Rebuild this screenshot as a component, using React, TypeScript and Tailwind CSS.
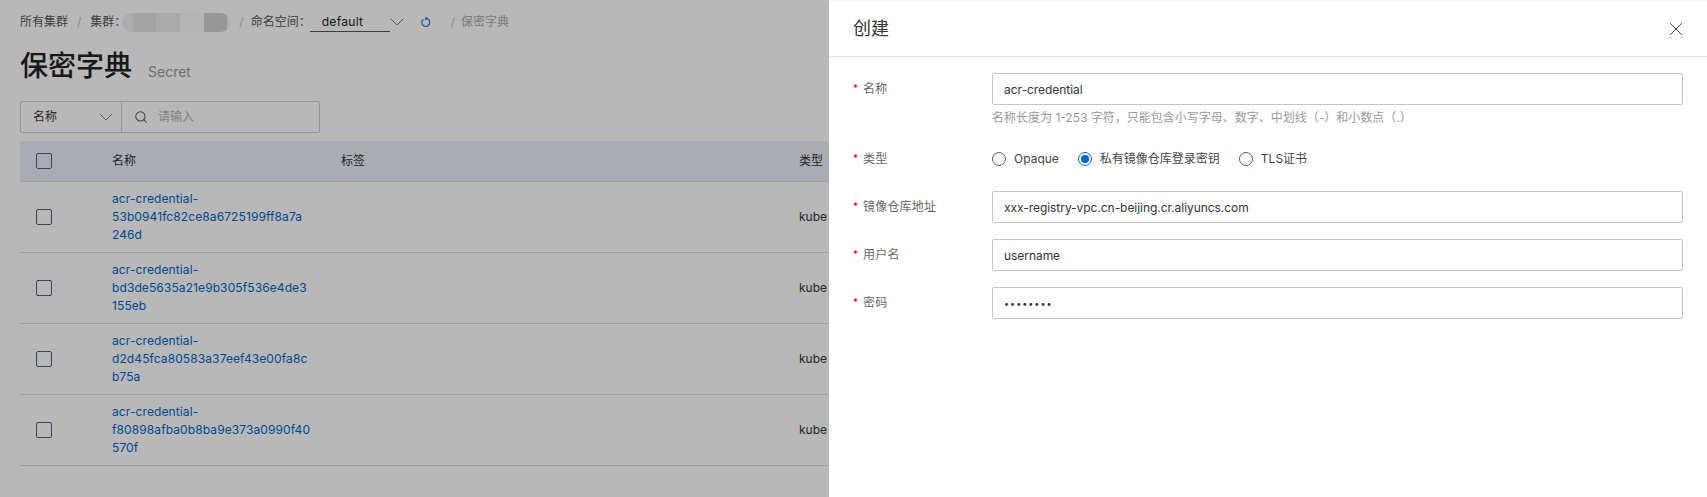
import { ChevronDown, Search, X } from 'lucide-react';

const secrets = [
  ['acr-credential-', '53b0941fc82ce8a6725199ff8a7a', '246d'],
  ['acr-credential-', 'bd3de5635a21e9b305f536e4de3', '155eb'],
  ['acr-credential-', 'd2d45fca80583a37eef43e00fa8c', 'b75a'],
  ['acr-credential-', 'f80898afba0b8ba9e373a0990f40', '570f'],
];

function Checkbox() {
  return <div className="w-4 h-4 rounded-[2px] border border-[#3f6188] bg-transparent" />;
}

function Slash() {
  return <span className="text-[#c4c4c4]">/</span>;
}

function Field({ label, value, type = 'text' }: { label: string; value: string; type?: string }) {
  return (
    <div className="flex mb-4">
      <FormLabel label={label} />
      <input
        readOnly
        type={type}
        value={value}
        className={`flex-1 h-8 pl-[11px] pr-3 text-[#333] border border-[#c0c6cc] rounded-[2px] outline-none ${type === 'password' ? 'text-[9px] tracking-[1px]' : 'text-xs tracking-[-0.05px]'}`}
      />
    </div>
  );
}

function FormLabel({ label }: { label: string }) {
  return (
    <label className="w-[139px] shrink-0 h-[32px] flex items-center text-xs tracking-[0.2px] text-[#666]">
      <span className="w-[10px] text-[10px] text-[#e00000]">*</span>
      {label}
    </label>
  );
}

function Radio({ label, checked }: { label: string; checked?: boolean }) {
  return (
    <div className="flex items-center gap-2">
      <span className={`w-[14px] h-[14px] rounded-full border flex items-center justify-center ${checked ? 'border-[#0064c8]' : 'border-[#3f6188]'}`}>
        {checked && <span className="w-2 h-2 rounded-full bg-[#0064c8]" />}
      </span>
      <span className="text-xs text-[#444]">{label}</span>
    </div>
  );
}

export default function App() {
  return (
    <div className="relative h-screen overflow-hidden bg-white font-['Inter','Noto_Sans_CJK_SC',sans-serif]">
      {/* Page behind the drawer */}
      <div className="px-5 pt-3">
        <div className="flex items-center h-5 text-xs text-[#555]">
          <span>所有集群</span>
          <span className="mx-[9px]"><Slash /></span>
          <span>集群：</span>
          <div className="flex h-[19px] w-[108px] ml-[-4px] mt-[1px] overflow-hidden rounded-full bg-[#f0f0f0]">
            <div className="w-[11px]" />
            <div className="w-[23px] bg-[#e4e4e4]" />
            <div className="w-[24px] bg-[#ececec]" />
            <div className="w-[24px] bg-[#fbfbfb]" />
            <div className="w-[23px] bg-[#d2d2d2]" />
          </div>
          <span className="ml-[9px] mr-[7px]"><Slash /></span>
          <span>命名空间：</span>
          <div className="flex items-center w-[80px] h-5 ml-[-1px] pl-3 border-b border-[#555] text-xs tracking-[0.3px] text-[#222]">default</div>
          <ChevronDown className="w-6 h-6 -mx-[5px] text-[#555]" strokeWidth={0.75} />
          <svg viewBox="0 0 12 12" className="w-3 h-3 ml-[16px]" fill="none" stroke="#2f78d0" strokeWidth="1.3">
            <path d="M7.2 2.7 A4 4 0 1 1 3.4 3.2" />
            <path d="M5.2 0.6 L8.2 2.6 L5.2 4.6 Z" fill="#2f78d0" stroke="none" />
          </svg>
          <span className="ml-[19px] mr-[6px]"><Slash /></span>
          <span className="text-[#aaa]">保密字典</span>
        </div>

        <div className="flex items-baseline mt-[14px] h-10">
          <h1 className="text-[28px] leading-10 font-medium text-[#222]">保密字典</h1>
          <span className="ml-4 text-sm translate-y-[1px] text-[#999]">Secret</span>
        </div>

        <div className="flex w-[300px] h-8 mt-[15px] border border-[#d0d0d0] rounded-[2px] text-xs">
          <div className="flex items-center justify-between w-[101px] pl-3 pr-[3px] border-r border-[#d0d0d0] text-[#333]">
            名称
            <ChevronDown className="w-6 h-6 text-[#555]" strokeWidth={0.75} />
          </div>
          <div className="flex items-center pl-3 text-[#b5b5b5]">
            <Search className="w-[14px] h-[14px] text-[#555] mr-[10px]" strokeWidth={1.75} />
            请输入
          </div>
        </div>

        <div className="mt-2 text-xs">
          <div className="flex items-center h-[41px] bg-[#ebeff6] border-b border-[#dcdcdc] text-[#333]">
            <div className="w-[92px] pl-4"><Checkbox /></div>
            <div className="w-[229px]">名称</div>
            <div className="w-[458px]">标签</div>
            <div>类型</div>
          </div>
          {secrets.map((lines) => (
            <div key={lines[1]} className="flex items-center h-[71px] border-b border-[#dcdcdc]">
              <div className="w-[92px] pl-4"><Checkbox /></div>
              <div className="w-[687px] leading-[18px] tracking-[0.1px] text-[#0064c8]">
                {lines.map((line) => (
                  <div key={line}>{line}</div>
                ))}
              </div>
              <div className="text-[#333]">kube</div>
            </div>
          ))}
        </div>
      </div>

      {/* Overlay */}
      <div className="absolute inset-0 bg-black/[0.28]" />

      {/* Create drawer */}
      <div className="absolute top-0 right-0 bottom-0 w-[878px] bg-white border-t border-[#f5f5f5]">
        <div className="flex items-center justify-between h-[56px] pl-[24px] pr-[20px] border-b border-[#e3e3e3]">
          <span className="text-lg text-[#333]">创建</span>
          <X className="w-[22px] h-[22px] text-[#333]" strokeWidth={1} />
        </div>
        <div className="pt-4 pl-[24px] pr-[24px]">
          <div className="flex mb-4">
            <FormLabel label="名称" />
            <div className="flex-1">
              <input
                readOnly
                value="acr-credential"
                className="w-full h-8 pl-[11px] pr-3 text-xs tracking-[-0.05px] text-[#333] border border-[#c0c6cc] rounded-[2px] outline-none"
              />
              <div className="mt-[4px] text-xs leading-[18px] text-[#999]">名称长度为 1-253 字符，只能包含小写字母、数字、中划线（-）和小数点（.）</div>
            </div>
          </div>
          <div className="flex mb-4 h-8">
            <FormLabel label="类型" />
            <div className="flex items-center gap-[19px]">
              <Radio label="Opaque" />
              <Radio label="私有镜像仓库登录密钥" checked />
              <Radio label="TLS证书" />
            </div>
          </div>
          <Field label="镜像仓库地址" value="xxx-registry-vpc.cn-beijing.cr.aliyuncs.com" />
          <Field label="用户名" value="username" />
          <Field label="密码" value="password" type="password" />
        </div>
      </div>
    </div>
  );
}
